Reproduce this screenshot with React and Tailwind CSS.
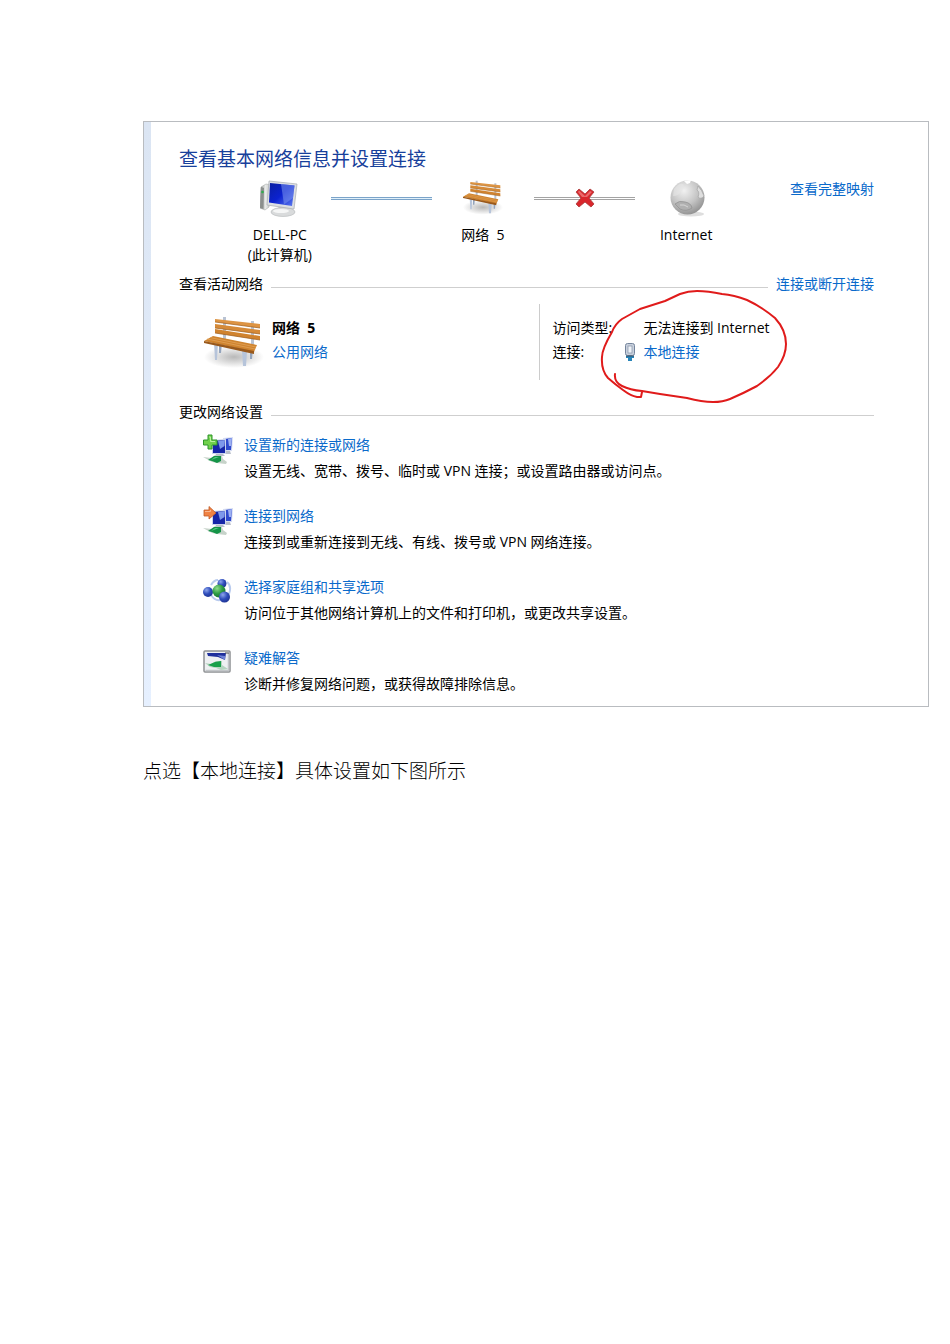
const tasks = [
  {
    icon: NewConnectionIcon,
    title: "设置新的连接或网络",
    text: "设置无线、宽带、拨号、临时或 VPN 连接；或设置路由器或访问点。",
  },
  {
    icon: ConnectIcon,
    title: "连接到网络",
    text: "连接到或重新连接到无线、有线、拨号或 VPN 网络连接。",
  },
  {
    icon: HomeGroupIcon,
    title: "选择家庭组和共享选项",
    text: "访问位于其他网络计算机上的文件和打印机，或更改共享设置。",
  },
  {
    icon: TroubleshootIcon,
    title: "疑难解答",
    text: "诊断并修复网络问题，或获得故障排除信息。",
  },
];

function ComputerIcon() {
  return (
    <svg viewBox="0 0 40 38" className="h-[38px] w-10" aria-hidden="true">
      <defs>
        <linearGradient id="screen" x1="0" y1="0" x2="1" y2="1">
          <stop offset="0" stopColor="#0a1fa0" />
          <stop offset="0.5" stopColor="#0b22d0" />
          <stop offset="1" stopColor="#5f7df0" />
        </linearGradient>
        <linearGradient id="tower" x1="0" y1="0" x2="1" y2="0">
          <stop offset="0" stopColor="#8f9391" />
          <stop offset="0.5" stopColor="#e8eae9" />
          <stop offset="1" stopColor="#bfc2c1" />
        </linearGradient>
      </defs>
      <path d="M1 8L6 5L11 6L9 28L5 31L0 29Z" fill="url(#tower)" stroke="#a9acab" strokeWidth="0.6" />
      <path d="M1 8L4 9L3.500 30L0 29Z" fill="#8b8f8d" />
      <circle cx="2.500" cy="13" r="1.300" fill="#2fae4d" />
      <path d="M19 25L26 26L28 31L18 31Z" fill="#c9cccd" />
      <ellipse cx="23" cy="33" rx="12" ry="4.500" fill="#d9dbdc" stroke="#b4b7b9" strokeWidth="0.6" />
      <ellipse cx="21" cy="32" rx="8" ry="2" fill="#f5f6f6" />
      <path d="M9 2L37 5L34 30L7 26Z" fill="#dcdfe3" stroke="#a9adb2" strokeWidth="0.7" />
      <path d="M10 4L34.500 6.500L32 27L9 23.500Z" fill="url(#screen)" />
      <path d="M21 5L34.500 6.500L33 19L24 25.500Z" fill="#7b96ee" opacity="0.55" />
    </svg>
  );
}

function BenchIcon({ className }) {
  return (
    <svg viewBox="0 0 60 54" className={className} aria-hidden="true">
      <defs>
        <radialGradient id="benchShade">
          <stop offset="0" stopColor="#9a9a9a" stopOpacity="0.7" />
          <stop offset="1" stopColor="#9a9a9a" stopOpacity="0" />
        </radialGradient>
      </defs>
      <ellipse cx="30" cy="41" rx="30" ry="11" fill="url(#benchShade)" />
      <path d="M19 1L22 1L22 24L19 23ZM47 5L50 5L50 29L47 28Z" fill="#b9c3d3" />
      <path d="M15 27L18 27L17 37L15 37ZM46 33L49 32L48 43L46 43Z" fill="#93a4bd" />
      <path d="M10 26L14 27L13 44L11 44ZM38 34L43 35L42 50L39 50Z" fill="#b6c4da" />
      <path d="M11 3L56 8L56 12L11 6Z" fill="#dd9443" />
      <path d="M11 8L56 14L56 18L11 12Z" fill="#d58a38" />
      <path d="M11 13L56 20L56 24L11 17Z" fill="#d0832f" />
      <path d="M11 6L56 12M11 12L56 18M11 17L56 24" stroke="#9c5c1b" strokeWidth="0.7" />
      <path d="M0 25L9 20L53 29L50 36Z" fill="#cf842f" />
      <path d="M3 23L51 33M6 21.500L52 31" stroke="#e2a258" strokeWidth="0.8" />
      <path d="M0 25L50 35L50 38L0 27Z" fill="#99591c" />
    </svg>
  );
}

function GlobeIcon() {
  return (
    <svg viewBox="0 0 38 38" className="size-[38px]" aria-hidden="true">
      <defs>
        <radialGradient id="globe" cx="0.4" cy="0.3" r="0.75">
          <stop offset="0" stopColor="#f1f1f1" />
          <stop offset="0.55" stopColor="#c4c4c4" />
          <stop offset="1" stopColor="#8d8d8d" />
        </radialGradient>
      </defs>
      <ellipse cx="24" cy="35" rx="13" ry="2.500" fill="#dedede" />
      <circle cx="20.500" cy="18.500" r="17" fill="url(#globe)" />
      <path d="M17 2L24 1L23 4L20 5Z" fill="#fff" />
      <path d="M7 10Q12 4 16 5Q18 9 14 12Q12 17 6 17Z" fill="#e6e6e6" opacity="0.6" />
      <path d="M31 7Q35 11 37 17Q34 21 31 18Q33 13 30 11Z" fill="#dedede" stroke="#a5a5a5" strokeWidth="0.7" />
      <path d="M8 25Q12 21 18 23Q24 24 25 29Q19 33 13 30Z" fill="#b0b0b0" stroke="#939393" strokeWidth="0.8" />
      <path d="M13 26Q17 25 21 28" fill="none" stroke="#d5d5d5" />
    </svg>
  );
}

function CrossIcon() {
  return (
    <svg viewBox="0 0 20 20" className="absolute size-5" aria-hidden="true">
      <path
        d="M4 1L10 6L15 1L19 4L14 10L19 16L16 19L10 14L4 19L1 16L6 10L1 4Z"
        fill="#d9262c"
        stroke="#a83a3a"
        strokeWidth="0.8"
        strokeLinejoin="round"
      />
      <path d="M4 2.500L10 8L15 3L17 4L12 9L7 9L3 4Z" fill="#f08080" opacity="0.75" />
    </svg>
  );
}

function PlugIcon() {
  return (
    <svg viewBox="0 0 12 20" className="h-5 w-3" aria-hidden="true">
      <rect x="1.500" y="1.500" width="9" height="12" rx="2" fill="#c8d0dc" stroke="#75859d" />
      <rect x="4" y="4" width="4" height="7" fill="#eef2f7" stroke="#8592a6" strokeWidth="0.7" />
      <path d="M2 14H10V16H8V19H4V16H2Z" fill="#2784b8" />
      <path d="M2 14H10" stroke="#3b5067" />
    </svg>
  );
}

// two monitors and a green cable, shared by the connection icons
function Monitors() {
  return (
    <>
      <path d="M20 5L30 4L29 18L20 19Z" fill="#d5dcf2" />
      <path d="M22 6L29 5L28 17L22 17Z" fill="#2f49cc" />
      <path d="M25 6L29 5L28 13L26 13Z" fill="#9db0f2" />
      <path d="M9 7L23 6L23 21L9 21Z" fill="#ccd4ec" />
      <path d="M10 8L22 7L22 20L10 20Z" fill="#1626a8" />
      <path d="M15 8L22 7L21.500 13L17 16Z" fill="#7e98ea" />
      <path d="M13 21H20L22 23H12ZM23 18L27 18L28 21H23Z" fill="#b9bfcb" />
      <path d="M0 24L9 25L12 22L19 23L20 26L24 29L23 31L14 30L9 29Z" fill="#c7d3ca" />
      <path d="M5 27L11 23L18 23L18 28L14 30L9 28Z" fill="#149447" />
      <path d="M8 27L12 24L16 24Z" fill="#5cc983" />
    </>
  );
}

function NewConnectionIcon() {
  return (
    <svg viewBox="0 0 30 32" className="h-8 w-[30px]" aria-hidden="true">
      <Monitors />
      <path d="M5 2H9V7H14V12H9V16H5V12H0.500V7H5Z" fill="#71d14c" stroke="#2f962b" strokeWidth="1" />
      <path d="M6 4H7.500V8.500H12" fill="none" stroke="#b9f09d" />
    </svg>
  );
}

function ConnectIcon() {
  return (
    <svg viewBox="0 0 30 32" className="h-8 w-[30px]" aria-hidden="true">
      <Monitors />
      <path d="M1 6H6V2.500L13 9L6 15V12H1Z" fill="#f08243" stroke="#c25a27" strokeWidth="0.8" />
      <path d="M2 7.500H7.500V6" fill="none" stroke="#f9b78f" />
    </svg>
  );
}

function HomeGroupIcon() {
  return (
    <svg viewBox="0 0 30 32" className="h-8 w-[30px]" aria-hidden="true">
      <defs>
        <radialGradient id="blueBall" cx="0.35" cy="0.3" r="0.8">
          <stop offset="0" stopColor="#8ea6ec" />
          <stop offset="0.5" stopColor="#2f4dbb" />
          <stop offset="1" stopColor="#1b2f8c" />
        </radialGradient>
        <radialGradient id="greenBall" cx="0.35" cy="0.3" r="0.8">
          <stop offset="0" stopColor="#90dc8c" />
          <stop offset="0.5" stopColor="#2f9d45" />
          <stop offset="1" stopColor="#146b30" />
        </radialGradient>
      </defs>
      <path d="M8 20Q12 26 17 25M24 7Q29 11 26 19M8 10Q11 5 15 5" fill="none" stroke="#b9cbee" strokeWidth="2" />
      <circle cx="19" cy="8.500" r="4.500" fill="url(#blueBall)" />
      <circle cx="5" cy="17" r="5" fill="url(#blueBall)" />
      <circle cx="16" cy="16" r="6.500" fill="url(#greenBall)" />
      <circle cx="21.500" cy="22" r="5.500" fill="url(#blueBall)" />
    </svg>
  );
}

function TroubleshootIcon() {
  return (
    <svg viewBox="0 0 30 32" className="h-8 w-[30px]" aria-hidden="true">
      <rect x="1" y="5" width="26" height="21" rx="1" fill="#eef0f2" stroke="#8f9194" strokeWidth="1.500" />
      <path d="M2.500 24.500H25.500V7" fill="none" stroke="#c3c6c9" strokeWidth="1.500" />
      <path d="M4 7L23 7L22 14L15 11L5 10Z" fill="#1f2f9c" />
      <path d="M14 9L22 10L22 14Z" fill="#6f83d6" />
      <path d="M22 7H26" stroke="#555" />
      <path d="M2 17L8 18L13 15L19 15L19 19L25 23L18 24L13 22L7 21Z" fill="#b5d3bf" />
      <path d="M5 19L12 16L18 15L18 21L11 21Z" fill="#18a04a" />
    </svg>
  );
}

// hand-drawn red ring around the local connection
function RedCircle() {
  return (
    <svg
      viewBox="0 0 196 122"
      className="pointer-events-none absolute -top-[18px] left-14 h-[122px] w-[196px]"
      fill="none"
      stroke="#e01b1b"
      strokeWidth="2"
      strokeLinecap="round"
      strokeLinejoin="round"
      aria-hidden="true"
    >
      <path d="M19 88Q18 96 26 100Q34 104 46 105L64 108L91 112Q106 116 117 116Q127 116 134 113Q148 107 161 100Q174 91 182 81Q190 69 190 58Q190 44 179 32Q166 21 151 14Q138 9 126 8Q112 5 101 5Q92 5 84 8L69 15L44 23L26 33Q19 38 16 46Q6 63 6 71Q5 84 12 92Q20 99 27 104Q35 110 41 111L45 111L46 106" />
    </svg>
  );
}

function Link({ children, className = "" }) {
  return (
    <a href="#" className={`whitespace-nowrap text-[#0a6acb] hover:underline ${className}`}>
      {children}
    </a>
  );
}

function SectionHeader({ title, children }) {
  return (
    <div className="flex h-5 items-center gap-2">
      <h2>{title}</h2>
      <div className="mt-1.5 h-px flex-1 bg-[#cfcfcf]" />
      {children}
    </div>
  );
}

function MapNode({ icon, children }) {
  return (
    <div className="flex flex-col items-center text-center whitespace-nowrap">
      <div className="flex h-[38px] items-center">{icon}</div>
      <div className="mt-2 leading-5">{children}</div>
    </div>
  );
}

export default function App() {
  return (
    <main className="min-h-screen bg-white pt-[121px] pr-[21px] pb-12 pl-[143px] text-black">
      <section className="flex border border-[#b9bcc0] font-['Open_Sans','Noto_Sans_CJK_SC',sans-serif] text-sm">
        <div className="w-[7px] shrink-0 bg-linear-to-b from-[#dbe5f3] to-[#e6f0ff]" />
        <div className="min-w-0 flex-1 pt-[25px] pr-[54px] pb-2 pl-7">
          <h1 className="text-[19px] leading-6 text-[#17409b]">查看基本网络信息并设置连接</h1>

          <div className="mt-2 flex items-start gap-[53px] pl-[50px]">
            <div className="grid flex-1 grid-cols-5">
              <MapNode icon={<ComputerIcon />}>
                DELL-PC
                <br />
                (此计算机)
              </MapNode>
              <div className="flex h-[38px] items-center">
                <div className="h-[3px] w-full border-y border-[#7ba3c9] bg-[#dff0fa]" />
              </div>
              <MapNode icon={<BenchIcon className="h-9 w-10" />}>网络&nbsp; 5</MapNode>
              <div className="relative flex h-[38px] items-center justify-center">
                <div className="h-[3px] w-full border-y border-[#a3a3a3]" />
                <CrossIcon />
              </div>
              <MapNode icon={<GlobeIcon />}>Internet</MapNode>
            </div>
            <Link className="leading-5">查看完整映射</Link>
          </div>

          <div className="mt-[9px]">
            <SectionHeader title="查看活动网络">
              <Link>连接或断开连接</Link>
            </SectionHeader>
          </div>

          <div className="mt-2.5 flex h-[76px]">
            <div className="flex w-[52%] items-start gap-2 border-r border-[#cccccc] pt-3 pl-[25px]">
              <BenchIcon className="h-[54px] w-[60px]" />
              <div className="leading-6">
                <p className="font-bold">网络&nbsp; 5</p>
                <Link>公用网络</Link>
              </div>
            </div>
            <div className="relative flex-1 pt-3 pl-3">
              <dl className="grid grid-cols-[72px_1fr] leading-6 whitespace-nowrap">
                <dt>访问类型:</dt>
                <dd className="pl-[19px]">无法连接到 Internet</dd>
                <dt>连接:</dt>
                <dd className="flex items-center gap-[7px]">
                  <PlugIcon />
                  <Link>本地连接</Link>
                </dd>
              </dl>
              <RedCircle />
            </div>
          </div>

          <div className="mt-[22px]">
            <SectionHeader title="更改网络设置" />
          </div>

          <ul className="mt-[11px] flex flex-col gap-[19px] pl-6">
            {tasks.map(({ icon: Icon, title, text }) => (
              <li key={title} className="flex items-start gap-[11px]">
                <Icon />
                <div>
                  <Link className="block leading-6">{title}</Link>
                  <p className="leading-7">{text}</p>
                </div>
              </li>
            ))}
          </ul>
        </div>
      </section>

      <p className="mt-[49px] font-['Noto_Sans_CJK_SC',sans-serif] text-[19px] leading-7 font-light">
        点选【本地连接】具体设置如下图所示
      </p>
    </main>
  );
}
